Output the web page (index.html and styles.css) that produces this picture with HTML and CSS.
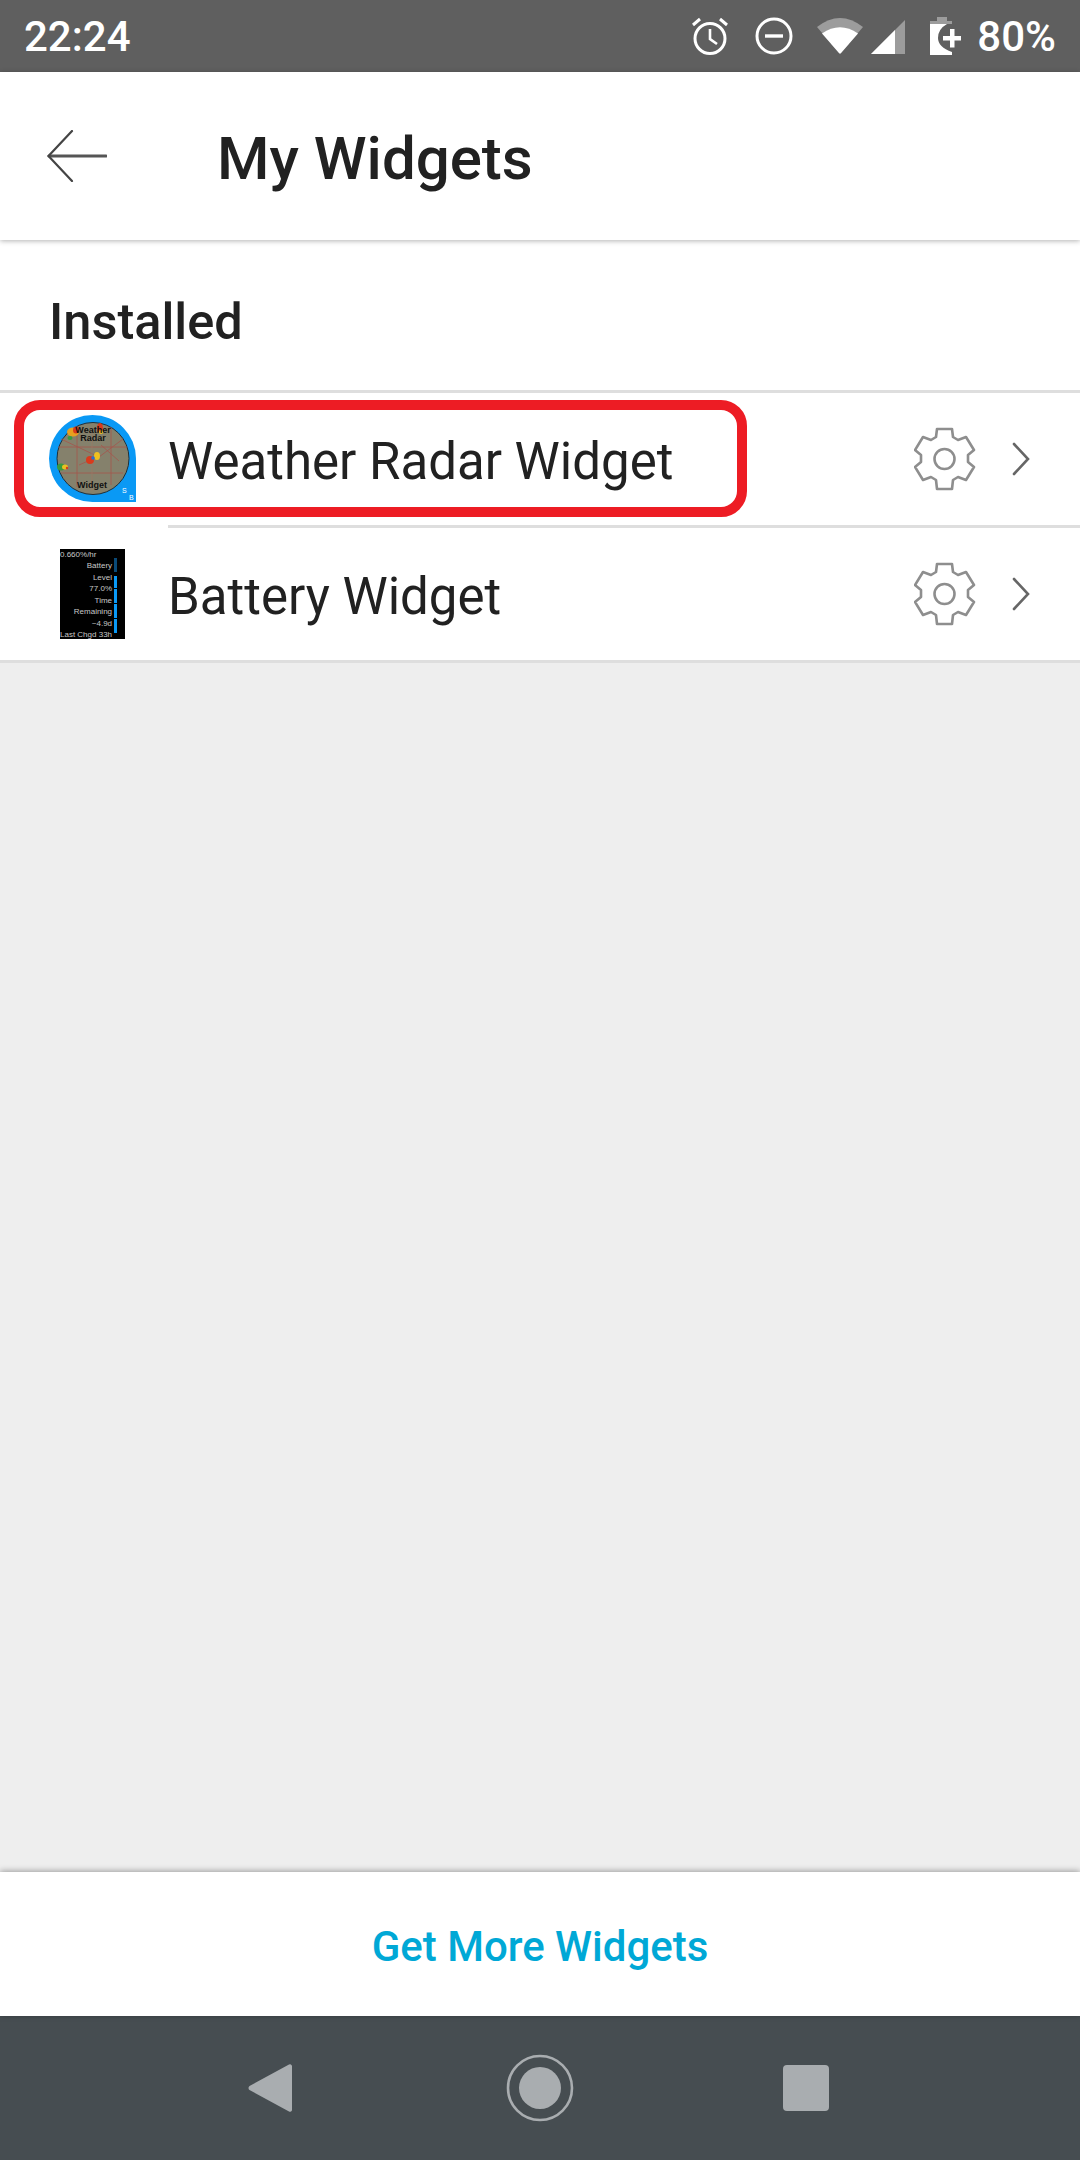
FILE: index.html
```html
<!DOCTYPE html>
<html lang="en">
<head>
    <meta charset="UTF-8">
    <title>My Widgets</title>
    <link rel="stylesheet" href="styles.css">
</head>
<body>
    <div class="status-bar">
        <span class="clock">22:24</span>
        <div class="status-icons">
            <svg class="ic-alarm" width="36" height="38" viewBox="0 0 36 38" fill="none" stroke="#fff" stroke-width="3">
                <circle cx="18" cy="21.5" r="15"/>
                <path d="M18 12v10l7 5" stroke-width="2.6"/>
                <path d="M1 8l7-6M35 8l-7-6" stroke-width="3"/>
            </svg>
            <svg class="ic-dnd" width="38" height="38" viewBox="0 0 38 38" fill="none" stroke="#fff" stroke-width="3">
                <circle cx="19" cy="19" r="17"/>
                <path d="M10 19h18" stroke-width="3.4"/>
            </svg>
            <svg class="ic-wifi" width="46" height="36" viewBox="0 0 46 36">
                <path d="M0 9Q23-9 46 9L24 35a1.4 1.4 0 0 1-2 0Z" fill="#9c9c9c"/>
                <path d="M5 15.500Q23 3 41 15.500L24 35a1.400 1.400 0 0 1-2 0Z" fill="#fff"/>
            </svg>
            <svg class="ic-signal" width="34" height="34" viewBox="0 0 34 34">
                <path d="M34 0V34H0Z" fill="#9c9c9c"/>
                <path d="M24 10V34H0Z" fill="#fff"/>
            </svg>
            <svg class="ic-battery" width="31" height="38" viewBox="0 0 31 38">
                <path d="M7 0h10v4h5v3H0V4h7Z" fill="#9c9c9c"/>
                <path d="M0 7h17Q8 12 8 21T22 35v3H0Z" fill="#fff"/>
                <path d="M20 12h4.500v7H31v4.500h-6.500v7H20v-7h-7V19h7Z" fill="#fff"/>
            </svg>
            <span class="percent">80%</span>
        </div>
    </div>

    <header class="app-bar">
        <svg class="back-arrow" width="60" height="52" viewBox="0 0 60 52" fill="none" stroke="#444" stroke-width="2.200" stroke-linecap="round">
            <path d="M59 26H2" stroke-width="3" stroke="#555"/>
            <path d="M25 1L1.500 26 25 51"/>
        </svg>
        <h1 class="app-title">My Widgets</h1>
    </header>

    <main class="content">
        <div class="section-head">
            <h2>Installed</h2>
        </div>
        <ul class="widget-list">
            <li class="widget-row">
                <div class="thumb">
                    <svg width="87" height="87" viewBox="0 0 87 87">
                        <path d="M43.500 0A43.500 43.500 0 0 0 43.500 87H87V43.500A43.500 43.500 0 0 0 43.500 0Z" fill="#0a99f5"/>
                        <circle cx="44" cy="43.500" r="36" fill="#85816c" stroke="#20303a" stroke-width="1"/>
                        <g fill="none" stroke="#a5564c" stroke-width="0.800">
                            <path d="M9 32H78M12 58H74M28 14V72M62 12V70M12 24L50 42 74 24M30 50L48 42M52 30L70 46"/>
                            <path d="M43 12V76" stroke="#9a7a66"/>
                        </g>
                        <ellipse cx="24" cy="17" rx="6" ry="4.500" fill="#e8a020"/>
                        <ellipse cx="27" cy="15" rx="3" ry="3.500" fill="#d93a1c"/>
                        <ellipse cx="21" cy="23" rx="2.500" ry="2" fill="#3a9a3e"/>
                        <ellipse cx="51" cy="13" rx="3" ry="5" fill="#d93a1c"/>
                        <circle cx="52" cy="17" r="2" fill="#efc020"/>
                        <ellipse cx="12" cy="52" rx="4" ry="3.500" fill="#3a9a3e"/>
                        <ellipse cx="16" cy="52" rx="3" ry="2.500" fill="#e8c020"/>
                        <circle cx="18" cy="53" r="1.200" fill="#d93a1c"/>
                        <circle cx="41" cy="45" r="4" fill="#d93a1c"/>
                        <ellipse cx="48" cy="41" rx="3" ry="4" fill="#efc020"/>
                        <circle cx="44" cy="43" r="1.800" fill="#2a6bd0"/>
                        <text class="thumb-radar" x="44" y="18" text-anchor="middle">Weather</text>
                        <text class="thumb-radar" x="44" y="26" text-anchor="middle">Radar</text>
                        <text class="thumb-radar" x="43" y="73" text-anchor="middle">Widget</text>
                        <text class="thumb-mark" x="73" y="78">S</text>
                        <text class="thumb-mark" x="80" y="85">B</text>
                    </svg>
                </div>
                <span class="widget-name">Weather Radar Widget</span>
                <svg class="gear" width="62" height="64" viewBox="0 0 62 64" fill="none" stroke="#8e8e8e" stroke-width="2.600" stroke-linejoin="round">
                    <path d="M23 2h15l1 8 5 3 8-3 8 13-6 5v7l6 5-8 13-8-3-5 3-1 9H23l-1-9-5-3-8 3-8-13 6-5v-7l-6-5 8-13 8 3 5-3Z"/>
                    <circle cx="30.500" cy="32" r="10"/>
                </svg>
                <svg class="chevron" width="18" height="34" viewBox="0 0 18 34" fill="none" stroke="#666" stroke-width="2.600" stroke-linecap="round">
                    <path d="M2 2l14 15L2 32"/>
                </svg>
                <div class="highlight"></div>
            </li>
            <li class="widget-row">
                <div class="thumb">
                    <div class="battery-thumb">
                        <div class="battery-text">
                            <span class="rate">0.660%/hr</span>
                            <span>Battery</span>
                            <span>Level</span>
                            <span>77.0%</span>
                            <span>Time</span>
                            <span>Remaining</span>
                            <span>~4.9d</span>
                            <span>Last Chgd 33h</span>
                        </div>
                        <div class="battery-gauge"></div>
                    </div>
                </div>
                <span class="widget-name">Battery Widget</span>
                <svg class="gear" width="62" height="64" viewBox="0 0 62 64" fill="none" stroke="#8e8e8e" stroke-width="2.600" stroke-linejoin="round">
                    <path d="M23 2h15l1 8 5 3 8-3 8 13-6 5v7l6 5-8 13-8-3-5 3-1 9H23l-1-9-5-3-8 3-8-13 6-5v-7l-6-5 8-13 8 3 5-3Z"/>
                    <circle cx="30.500" cy="32" r="10"/>
                </svg>
                <svg class="chevron" width="18" height="34" viewBox="0 0 18 34" fill="none" stroke="#666" stroke-width="2.600" stroke-linecap="round">
                    <path d="M2 2l14 15L2 32"/>
                </svg>
            </li>
        </ul>
    </main>

    <div class="bottom-action">
        <a href="#">Get More Widgets</a>
    </div>

    <nav class="nav-bar">
        <svg width="44" height="50" viewBox="0 0 44 50">
            <path d="M41 1.500a2 2 0 0 1 3 1.500v44a2 2 0 0 1-3 1.500L1.500 27a2.500 2.500 0 0 1 0-4Z" fill="#a9adb0"/>
        </svg>
        <svg width="68" height="68" viewBox="0 0 68 68">
            <circle cx="34" cy="34" r="32" fill="none" stroke="#a9adb0" stroke-width="2.600"/>
            <circle cx="34" cy="34" r="21" fill="#a9adb0"/>
        </svg>
        <div class="nav-square"></div>
    </nav>
</body>
</html>
```

FILE: styles.css
```css
/* General Styles */
html, body {
    margin: 0;
    padding: 0;
    font-family: Roboto, "Liberation Sans", sans-serif;
}

body {
    width: 1080px;
    height: 2160px;
    display: flex;
    flex-direction: column;
    overflow: hidden;
    background-color: #eeeeee;
}

/* Status Bar */
.status-bar {
    height: 72px;
    flex-shrink: 0;
    display: flex;
    align-items: center;
    justify-content: space-between;
    padding: 0 24px;
    background-color: #5f5f5f;
    color: white;
    box-sizing: border-box;
}

.clock {
    font-size: 42px;
    font-weight: 500;
}

.status-icons {
    display: flex;
    align-items: center;
}

.ic-dnd {
    margin-left: 27px;
}

.ic-wifi {
    margin-left: 24px;
}

.ic-signal {
    margin-left: 8px;
    margin-top: 2px;
}

.ic-battery {
    margin-left: 25px;
}

.percent {
    font-size: 42px;
    font-weight: 500;
    margin-left: 16px;
}

/* Header */
.app-bar {
    height: 168px;
    flex-shrink: 0;
    display: flex;
    align-items: center;
    background-color: white;
    box-shadow: 0 1px 5px rgba(0, 0, 0, 0.3);
    position: relative;
    z-index: 1;
}

.back-arrow {
    margin-left: 47px;
}

.app-title {
    margin: 0 0 0 110px;
    padding-top: 5px;
    font-size: 60px;
    font-weight: 500;
    color: #212121;
}

/* Main Content */
.content {
    flex: 1;
    background-color: #eeeeee;
}

.section-head {
    height: 153px;
    display: flex;
    align-items: center;
    padding-left: 49px;
    background-color: white;
    border-bottom: 3px solid #dedede;
    box-sizing: border-box;
}

.section-head h2 {
    margin: 0;
    padding-top: 12px;
    font-size: 50.5px;
    font-weight: 500;
    color: #212121;
}

.widget-list {
    margin: 0;
    padding: 0;
    list-style: none;
    background-color: white;
    border-bottom: 3px solid #dedede;
}

.widget-row {
    height: 134px;
    padding-bottom: 3px;
    box-sizing: border-box;
    display: flex;
    align-items: center;
    position: relative;
}

.widget-row + .widget-row {
    height: 133px;
    padding-bottom: 0;
}

.widget-row + .widget-row::before {
    content: "";
    position: absolute;
    top: -2px;
    left: 168px;
    right: 0;
    height: 3px;
    background-color: #dedede;
}

.thumb {
    width: 168px;
    flex-shrink: 0;
    display: flex;
    justify-content: center;
    padding-left: 17px;
    box-sizing: border-box;
}

.thumb svg {
    display: block;
}

.thumb-radar {
    font-family: "Liberation Sans", sans-serif;
    font-size: 9px;
    font-weight: bold;
    fill: #111;
}

.thumb-mark {
    font-family: "Liberation Sans", sans-serif;
    font-size: 7px;
    fill: white;
}

.widget-name {
    flex: 1;
    padding-top: 6px;
    font-size: 51px;
    color: #212121;
}

.gear {
    margin-right: 36px;
}

.chevron {
    margin-right: 50px;
}

/* Red marker round the first row */
.highlight {
    position: absolute;
    top: 7px;
    left: 14px;
    width: 733px;
    height: 117px;
    border: 10px solid #ed1c24;
    border-radius: 26px;
    box-sizing: border-box;
}

/* Battery thumbnail */
.battery-thumb {
    width: 65px;
    height: 90px;
    display: flex;
    background-color: black;
    overflow: hidden;
}

.battery-text {
    flex: 1;
    display: flex;
    flex-direction: column;
    align-items: flex-end;
    color: #c8c8c8;
    font-family: "Liberation Sans", sans-serif;
    font-size: 8px;
    line-height: 11.5px;
    white-space: nowrap;
}

.battery-text .rate {
    align-self: flex-start;
}

.battery-gauge {
    width: 5px;
    height: 75px;
    margin: 9px 8px 0 2px;
    background: linear-gradient(#0a4a78 0 14px, #000 14px 18px, #0a99f5 18px 30px, #000 30px 31px, #0a99f5 31px 45px, #000 45px 46px, #0a99f5 46px 60px, #000 60px 61px, #0a99f5 61px);
}

/* Bottom Action */
.bottom-action {
    height: 144px;
    flex-shrink: 0;
    display: flex;
    align-items: center;
    justify-content: center;
    background-color: white;
    box-shadow: 0 -1px 6px rgba(0, 0, 0, 0.35);
    position: relative;
}

.bottom-action a {
    padding-top: 5px;
    font-size: 42px;
    font-weight: 500;
    color: #00a8d6;
    text-decoration: none;
}

/* Navigation Bar */
.nav-bar {
    height: 144px;
    flex-shrink: 0;
    display: flex;
    align-items: center;
    background-color: #464d51;
    padding-left: 248px;
    box-sizing: border-box;
}

.nav-bar svg:nth-child(2) {
    margin-left: 214px;
}

.nav-square {
    width: 46px;
    height: 46px;
    margin-left: 209px;
    border-radius: 4px;
    background-color: #a9adb0;
}
```
